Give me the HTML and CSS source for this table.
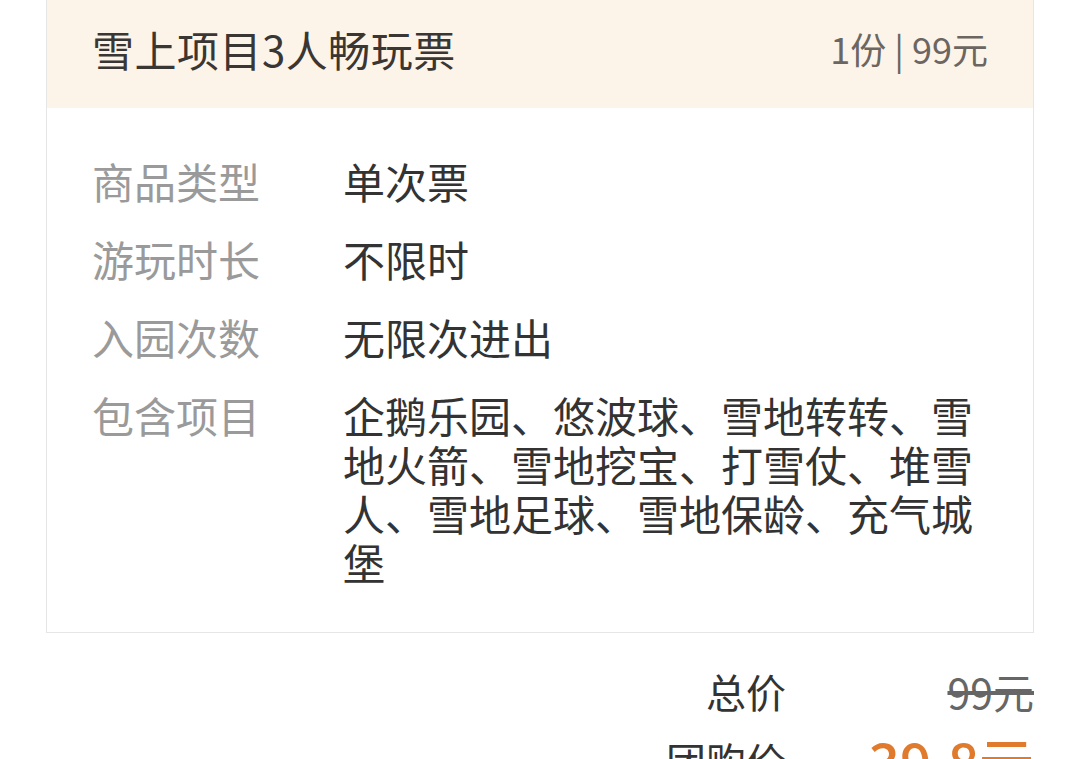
FILE: index.html
```html
<!DOCTYPE html>
<html lang="zh-CN">
<head>
    <meta charset="UTF-8">
    <meta name="viewport" content="width=device-width, initial-scale=1.0">
    <title>雪上项目3人畅玩票</title>
    <link rel="stylesheet" href="styles.css">
</head>
<body>
    <div class="ticket-card">
        <div class="ticket-header">
            <div class="ticket-title">雪上项目3人畅玩票</div>
            <div class="ticket-qty">1份 | 99元</div>
        </div>
        <div class="ticket-body">
            <div class="info-row">
                <div class="info-label">商品类型</div>
                <div class="info-value">单次票</div>
            </div>
            <div class="info-row">
                <div class="info-label">游玩时长</div>
                <div class="info-value">不限时</div>
            </div>
            <div class="info-row">
                <div class="info-label">入园次数</div>
                <div class="info-value">无限次进出</div>
            </div>
            <div class="info-row">
                <div class="info-label">包含项目</div>
                <div class="info-value">企鹅乐园、悠波球、雪地转转、雪地火箭、雪地挖宝、打雪仗、堆雪人、雪地足球、雪地保龄、充气城堡</div>
            </div>
        </div>
    </div>

    <div class="price-section">
        <div class="price-label">总价</div>
        <div class="price-value original">99元</div>
        <div class="price-label">团购价</div>
        <div class="price-value deal">39.8元</div>
    </div>
</body>
</html>
```

FILE: styles.css
```css
body {
    margin: 0;
    padding: 0;
    background-color: #ffffff;
    font-family: "Noto Sans CJK SC", "Noto Sans", sans-serif;
    color: #333333;
}

.ticket-card {
    margin: 0 46px;
    border: 1px solid #e6e6e6;
    border-top: none;
}

.ticket-header {
    display: flex;
    justify-content: space-between;
    align-items: center;
    height: 108px;
    padding: 0 45px 12px 45px;
    box-sizing: border-box;
    background-color: #fcf4e9;
}

.ticket-title {
    font-size: 42px;
    letter-spacing: 0.5px;
    color: #3a3633;
}

.ticket-qty {
    font-size: 36px;
    color: #6b6661;
}

.ticket-body {
    padding: 48px 45px 46px 45px;
    display: flex;
    flex-direction: column;
    gap: 29px;
}

.info-row {
    display: flex;
    font-size: 42px;
    line-height: 49px;
}

.info-label {
    width: 251px;
    flex-shrink: 0;
    color: #9a9a9a;
}

.info-value {
    flex: 1;
    color: #333333;
}

.price-section {
    display: grid;
    grid-template-columns: auto 248px;
    justify-content: end;
    align-items: center;
    row-gap: 16px;
    margin: 0 46px;
    padding-top: 33px;
}

.price-label {
    font-size: 40px;
    line-height: 50px;
    text-align: right;
    color: #333333;
}

.price-value {
    text-align: right;
}

.price-value.original {
    font-size: 41px;
    line-height: 50px;
    color: #666666;
    text-decoration: line-through;
}

.price-value.deal {
    font-size: 55px;
    line-height: 56px;
    color: #e07a2c;
    font-weight: 500;
}
```
